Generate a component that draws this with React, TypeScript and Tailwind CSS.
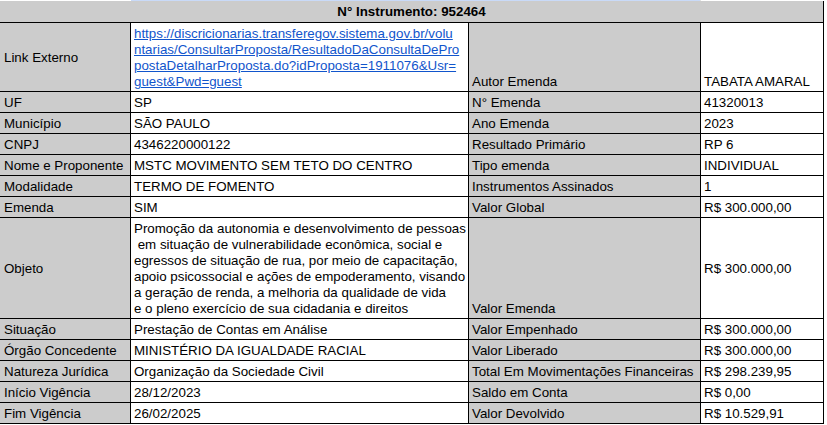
import React from "react";

type Align = "end" | "center" | "start";

function Cell({
  children,
  gray,
  align = "end",
  first,
}: {
  children?: React.ReactNode;
  gray?: boolean;
  align?: Align;
  first?: boolean;
}) {
  const a =
    align === "center" ? "items-center" : align === "start" ? "items-start" : "items-end";
  return (
    <div
      className={`flex ${a} ${gray ? "bg-[#cccccc]" : "bg-white"} ${
        first ? "pl-[4px]" : "pl-[3px]"
      } pr-[2px] pt-[3px] pb-[1px] leading-[16px] whitespace-pre overflow-visible`}
    >
      <div>{children}</div>
    </div>
  );
}

const rows: [string, string, string, string][] = [
  ["UF", "SP", "N° Emenda", "41320013"],
  ["Município", "SÃO PAULO", "Ano Emenda", "2023"],
  ["CNPJ", "4346220000122", "Resultado Primário", "RP 6"],
  ["Nome e Proponente", "MSTC MOVIMENTO SEM TETO DO CENTRO", "Tipo emenda", "INDIVIDUAL"],
  ["Modalidade", "TERMO DE FOMENTO", "Instrumentos Assinados", "1"],
  ["Emenda", "SIM", "Valor Global", "R$ 300.000,00"],
];

const rows2: [string, string, string, string][] = [
  ["Situação", "Prestação de Contas em Análise", "Valor Empenhado", "R$ 300.000,00"],
  ["Órgão Concedente", "MINISTÉRIO DA IGUALDADE RACIAL", "Valor Liberado", "R$ 300.000,00"],
  [
    "Natureza Jurídica",
    "Organização da Sociedade Civil",
    "Total Em Movimentações Financeiras",
    "R$ 298.239,95",
  ],
  ["Início Vigência", "28/12/2023", "Saldo em Conta", "R$ 0,00"],
  ["Fim Vigência", "26/02/2025", "Valor Devolvido", "R$ 10.529,91"],
];

const objeto = [
  "Promoção da autonomia e desenvolvimento de pessoas",
  " em situação de vulnerabilidade econômica, social e",
  "egressos de situação de rua, por meio de capacitação,",
  "apoio psicossocial e ações de empoderamento, visando",
  "a geração de renda, a melhoria da qualidade de vida",
  "e o pleno exercício de sua cidadania e direitos",
];

const link = [
  "https://discricionarias.transferegov.sistema.gov.br/volu",
  "ntarias/ConsultarProposta/ResultadoDaConsultaDePro",
  "postaDetalharProposta.do?idProposta=1911076&Usr=",
  "guest&Pwd=guest",
];

function Row({ r }: { r: [string, string, string, string] }) {
  return (
    <>
      <Cell gray first>
        {r[0]}
      </Cell>
      <Cell>{r[1]}</Cell>
      <Cell gray>{r[2]}</Cell>
      <Cell>{r[3]}</Cell>
    </>
  );
}

export default function App() {
  return (
    <div className="w-[827px] h-[425px] bg-white text-black text-[13.33px] font-['Liberation_Sans',Arial,sans-serif] overflow-hidden">
      <div className="flex h-px">
        <div className="w-[131px] bg-white" />
        <div className="w-[569px] bg-[#c9daf8]" />
        <div className="w-px bg-[#e2e2e2]" />
        <div className="flex-1 bg-white" />
      </div>
      <div className="w-[824px] bg-black pr-px pb-px grid grid-cols-[130px_337px_231px_122px] gap-px">
        <div className="col-span-4 h-[21px] bg-[#cccccc] flex items-end justify-center pb-[2px] leading-[16px] font-bold">
          N° Instrumento: 952464
        </div>

        <Cell gray first align="center">
          Link Externo
        </Cell>
        <Cell>
          <a href="#" className="text-[#1155cc] underline">
            {link.map((l, i) => (
              <React.Fragment key={i}>
                {l}
                {i < link.length - 1 && <br />}
              </React.Fragment>
            ))}
          </a>
        </Cell>
        <Cell gray>Autor Emenda</Cell>
        <Cell>TABATA AMARAL</Cell>

        {rows.map((r, i) => (
          <Row key={i} r={r} />
        ))}

        <Cell gray first align="center">
          Objeto
        </Cell>
        <Cell>
          {objeto.map((l, i) => (
            <div key={i}>{l}</div>
          ))}
        </Cell>
        <Cell gray>Valor Emenda</Cell>
        <Cell align="center">R$ 300.000,00</Cell>

        {rows2.map((r, i) => (
          <Row key={i} r={r} />
        ))}
      </div>
    </div>
  );
}
